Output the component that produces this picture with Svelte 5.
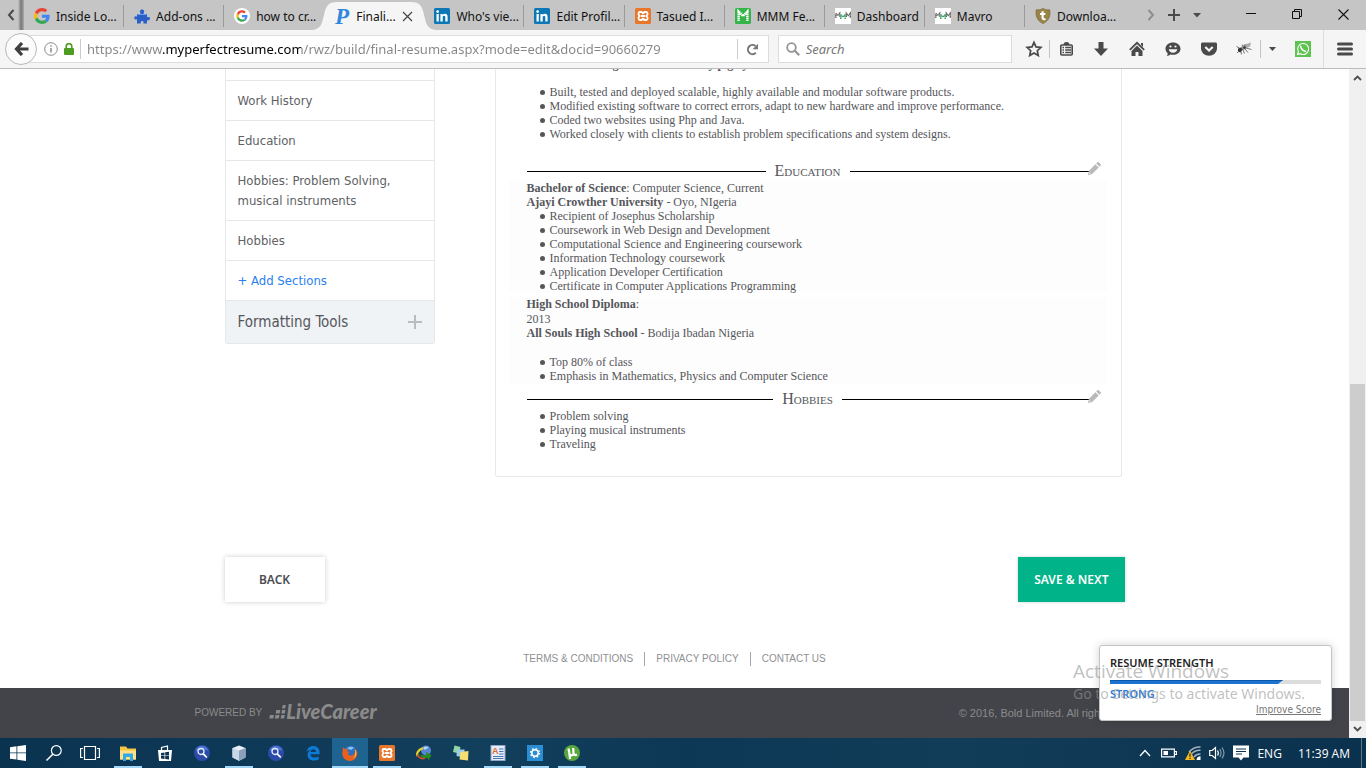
<script lang="ts">
  const tabs = [
    { icon: 'google', title: 'Inside Lo...' },
    { icon: 'puzzle', title: 'Add-ons ...' },
    { icon: 'googleRound', title: 'how to cr...' },
    { icon: 'perfect', title: 'Finali...', active: true },
    { icon: 'linkedin', title: "Who's vie..." },
    { icon: 'linkedin', title: 'Edit Profil...' },
    { icon: 'xampp', title: 'Tasued I...' },
    { icon: 'mmm', title: 'MMM Fe...' },
    { icon: 'mavro', title: 'Dashboard' },
    { icon: 'mavro', title: 'Mavro' },
    { icon: 'shield', title: 'Downloa...' }
  ];

  const sections = ['Work History', 'Education', 'Hobbies: Problem Solving, musical instruments', 'Hobbies'];

  const work = [
    'Built, tested and deployed scalable, highly available and modular software products.',
    'Modified existing software to correct errors, adapt to new hardware and improve performance.',
    'Coded two websites using Php and Java.',
    'Worked closely with clients to establish problem specifications and system designs.'
  ];
  const courses = [
    'Recipient of Josephus Scholarship',
    'Coursework in Web Design and Development',
    'Computational Science and Engineering coursework',
    'Information Technology coursework',
    'Application Developer Certification',
    'Certificate in Computer Applications Programming'
  ];
  const school = ['Top 80% of class', 'Emphasis in Mathematics, Physics and Computer Science'];
  const hobbies = ['Problem solving', 'Playing musical instruments', 'Traveling'];

  const apps = [
    { icon: 'folder', label: 'File Explorer', open: true },
    { icon: 'store', label: 'Store' },
    { icon: 'finder', label: 'Search tool' },
    { icon: 'cube', label: 'VirtualBox', open: true },
    { icon: 'finder', label: 'Search tool' },
    { icon: 'edge', label: 'Edge' },
    { icon: 'firefox', label: 'Firefox', open: true, current: true },
    { icon: 'xampp', label: 'XAMPP', open: true },
    { icon: 'idm', label: 'Download Manager' },
    { icon: 'notes', label: 'Sticky Notes' },
    { icon: 'wordpad', label: 'WordPad', open: true },
    { icon: 'gear', label: 'Settings', open: true },
    { icon: 'torrent', label: 'uTorrent', open: true }
  ];

  const strength = 82;
  let url = $state('https://www.myperfectresume.com/rwz/build/final-resume.aspx?mode=edit&docid=90660279');
  let query = $state('');
</script>

{#snippet googleG()}
  <path fill="#ea4335" d="M24 9.5c3.54 0 6.71 1.22 9.21 3.6l6.85-6.85C35.9 2.38 30.47 0 24 0 14.62 0 6.51 5.38 2.56 13.22l7.98 6.19C12.43 13.72 17.74 9.5 24 9.5z" />
  <path fill="#4285f4" d="M46.98 24.55c0-1.57-.15-3.09-.38-4.55H24v9.02h12.94c-.58 2.96-2.26 5.48-4.78 7.18l7.73 6c4.51-4.18 7.09-10.36 7.09-17.65z" />
  <path fill="#fbbc05" d="M10.53 28.59c-.48-1.45-.76-2.99-.76-4.59s.27-3.14.76-4.59l-7.98-6.19C.92 16.46 0 20.12 0 24c0 3.88.92 7.54 2.56 10.78l7.97-6.19z" />
  <path fill="#34a853" d="M24 48c6.48 0 11.93-2.13 15.89-5.81l-7.73-6c-2.15 1.45-4.92 2.3-8.16 2.3-6.26 0-11.57-4.22-13.47-9.91l-7.98 6.19C6.51 42.62 14.62 48 24 48z" />
{/snippet}

{#snippet icon(name: string)}
  <svg class="ico" viewBox="0 0 16 16" aria-hidden="true">
    {#if name === 'google'}
      <g transform="scale(.333)">{@render googleG()}</g>
    {:else if name === 'googleRound'}
      <circle cx="8" cy="8" r="8" fill="#fff" />
      <g transform="translate(2.3 2.3) scale(.237)">{@render googleG()}</g>
    {:else if name === 'puzzle'}
      <path fill="#2a5fc8" d="M3 6h3.400c.6-1-.7-1.400-.5-2.800C6.100 1.900 7.200 1.300 8.300 1.500c1.300.2 2 1.200 1.800 2.300-.2.900-.7 1.200-.3 2.200H13v3c.9.500 1.300-.3 2.200.1 1 .4 1 2.700-.1 3.200-.9.300-1.400-.4-2.100 0V15.500H9.600c-.6-.9.200-1.300-.2-2-.5-.8-2.100-.8-2.600 0-.4.800.4 1.200-.2 2H3v-4.200c-.7-.5-1 .4-1.900.2C.2 11.200 0 9 .9 8.400c.9-.500 1.400.400 2.100 0z" />
      <path d="M3.500 6.500h9" stroke="#6f9cf0" stroke-width="1" />
    {:else if name === 'perfect'}
      <text x="1" y="15.500" font-family="Liberation Serif, serif" font-size="23" font-weight="700" font-style="italic" fill="#2e86de">P</text>
    {:else if name === 'linkedin'}
      <rect width="16" height="16" rx="1.500" fill="#0b77b5" />
      <path fill="#fff" d="M2.500 6h2.300v7.500H2.500zM6.400 6h2.200v1c.5-.8 1.300-1.200 2.300-1.200 1.900 0 2.700 1.200 2.700 3.200v4.500h-2.300V9.500c0-1-.3-1.700-1.200-1.700-1 0-1.400.8-1.400 1.700v4H6.400z" />
      <circle cx="3.650" cy="3.600" r="1.350" fill="#fff" />
    {:else if name === 'xampp'}
      <rect width="16" height="16" rx="1.500" fill="#e8762b" />
      <path fill="none" stroke="#fff" stroke-width="1.800" d="M5 4h1.500L8 5.300 9.500 4H11a1.500 1.500 0 0 1 1.500 1.500v1L11.300 8l1.200 1.500v1A1.500 1.500 0 0 1 11 12H9.500L8 10.700 6.500 12H5a1.500 1.500 0 0 1-1.500-1.500v-1L4.700 8 3.500 6.500v-1A1.500 1.500 0 0 1 5 4zM6 8h4" />
    {:else if name === 'mmm'}
      <rect width="16" height="16" rx="1.500" fill="#35b44a" />
      <path fill="none" stroke="#fff" stroke-width="2.400" stroke-dasharray="1.600 .400" d="M3.600 13V3.500L8 8l4.400-4.500V13" />
    {:else if name === 'mavro'}
      <rect width="16" height="16" fill="#fff" />
      <path fill="none" stroke="#666" stroke-width="1.400" stroke-dasharray="1.300 .300" d="M.8 10V5.200L2.700 7.500l2-2.300V9M11.300 9V5.200l2 2.300 2-2.300V10" />
      <path fill="none" stroke="#32a060" stroke-width="1.500" stroke-dasharray="1.200 .400" d="M5.800 11V6.500L8 9l2.200-2.500V11" />
    {:else if name === 'shield'}
      <path fill="#9a8346" stroke="#71602f" stroke-width=".6" d="M8 .4c2.200 1.300 4.500 1.600 6.800 1.400.7 5.500-.3 10.700-6.800 13.800C1.500 12.500.5 7.300 1.200 1.800 3.500 2 5.800 1.700 8 .4z" />
      <path fill="none" stroke="#fff" stroke-width="2.200" d="M7.600 3.200v6.300c0 1.700 1.200 2 2.900 1.500M5 6h5.400" />
    {:else if name === 'folder'}
      <path fill="#f7c744" d="M0 1.500h6L7.500 3.500H16v11H0z" />
      <path fill="#fde08a" d="M0 5.500h16v9H0z" />
      <path fill="#2eaae6" d="M3 8.500h10V16h-3v-4H6v4H3z" />
    {:else if name === 'store'}
      <path fill="#fff" d="M1 5h14l-1 11H2z" />
      <path fill="none" stroke="#fff" stroke-width="1.200" d="M4.500 6V2.500l6-1.500v5" />
      <path fill="#0c3452" d="M4 8l3.500-.6v3H4zM8.200 7.300 12 6.800v3.600H8.200zM4 11.100h3.500v3L4 13.600zM8.200 11.100H12v3.500l-3.800-.5z" />
    {:else if name === 'finder'}
      <circle cx="8" cy="8" r="8" fill="#2c4ba8" />
      <path fill="#4d78d6" d="M8 1a7 7 0 0 1 6.500 5C11 4 6 4 1.500 6A7 7 0 0 1 8 1z" />
      <circle cx="7" cy="6.500" r="3" fill="none" stroke="#e5ebff" stroke-width="1.300" />
      <path d="m9.300 8.800 3.500 3.700" stroke="#fff" stroke-width="1.800" />
    {:else if name === 'cube'}
      <path fill="#e9f0f8" d="M8 .5 14.500 3v9.500L8 15.800 1.500 12.500V3z" />
      <path fill="#8ba0bd" d="M8 5.500 14.500 3v9.500L8 15.800z" />
      <path fill="#c9d6e6" d="M1.500 3 8 5.500v10.300l-6.500-3.300z" />
    {:else if name === 'edge'}
      <path fill="#0c7bd8" d="M1.500 7C2.200 3.200 4.700 1 8.300 1c4.300 0 6.300 3 6.300 6.400v1.800H5.500c.2 2.500 2 3.400 4.200 3.400 1.500 0 2.800-.4 4-1.100v3c-1.300.7-2.900 1-4.700 1C5 15.500 2.600 13.300 2.600 10c0-2.200 1.100-4 3-5C4.200 5 2.500 5.600 1.500 7zm4.100-.1h5.300c0-1.700-.8-2.700-2.500-2.700S5.800 5.300 5.600 6.900z" />
    {:else if name === 'firefox'}
      <circle cx="8.500" cy="7.500" r="6.800" fill="#2c6fc4" />
      <path fill="#83c3f2" d="M5 3.500C7 1.500 10 1.300 12 2.800L9 5z" />
      <path fill="#e8601c" d="M1 2.500c.8.300 1.400.8 1.800 1.400C4 3.400 5 3.700 6 4.400L4.900 6.200c1 .3 2 .3 2.600.8L5.800 8.600c1 2.500 4 2.700 6 1 1.300-1.300 1.500-3.500.9-5.600 1.500 1 2.500 2.700 2.700 4.500A7.400 7.400 0 0 1 8 15.900C3 15.900.1 12 .3 8c.1-2 .7-3.500.7-5.500z" />
      <path fill="#fbb829" d="M12.700 4c2.700 3 2 8-1.700 10 2.300-3 2.500-6.500 1.700-10z" />
    {:else if name === 'idm'}
      <circle cx="10" cy="5.500" r="5" fill="#5686d4" />
      <path fill="#b6d3f8" d="M7 3c1.500-2 4-2 5.500-.6L9 5z" />
      <path fill="none" stroke="#e9d322" stroke-width="2.200" d="M7 3C2 5 0 8.500 1.500 11" />
      <path fill="none" stroke="#d94c25" stroke-width="2" d="M1.300 9.500C2.500 13 6 14 9 13" />
      <path fill="#2a8c1e" d="M3 9c3 1.800 5 1.600 7.300.7V7L15.500 10.500 12 15.500v-2.700C8 13.500 4.500 12.500 3 9z" />
    {:else if name === 'notes'}
      <path fill="#8fd6a0" d="m1.500.5 6 1.500L6 8.500 0 7z" />
      <path fill="#9cccec" d="M4 4.500h7.500v8L3.500 11z" />
      <path fill="#f6df72" d="m7.500 7 8-1-.5 9.500-8.500-1z" />
    {:else if name === 'wordpad'}
      <rect x="1" y=".5" width="14" height="15" fill="#e4edf8" stroke="#8fa8c8" />
      <text x="2" y="9" font-family="Liberation Sans, sans-serif" font-size="9" font-weight="700" fill="#e06a28">A</text>
      <path stroke="#4d79b8" d="M9 4h4.500M9 6.500h4.500M9 9h4.500M3 11.500h10.500M3 13.500h10.500" />
    {:else if name === 'gear'}
      <rect width="16" height="16" fill="#2b8dd3" />
      <circle cx="8" cy="8" r="3.200" fill="none" stroke="#fff" stroke-width="1.500" />
      <circle cx="8" cy="8" r="4.500" fill="none" stroke="#fff" stroke-width="1.300" stroke-dasharray="1.600 1.934" />
    {:else if name === 'torrent'}
      <circle cx="8" cy="8" r="8" fill="#58a63c" />
      <path fill="none" stroke="#fff" stroke-width="2.200" d="M4.500 3.500 5.500 9c.3 1.800 3.500 1.800 4-.2L9.200 3M9.500 8.500c.4 1.800 2 2 3.500 1M5.300 8l.8 6" />
    {/if}
  </svg>
{/snippet}

{#snippet bullets(items: string[])}
  <ul>
    {#each items as item}<li>{item}</li>{/each}
  </ul>
{/snippet}

{#snippet heading(title: string)}
  <div class="heading">
    <h2>{title}</h2>
    <button class="edit" aria-label="Edit {title}">
      <svg viewBox="0 0 13 13" width="13" height="13"><path fill="#b8b9bb" d="M0 13l.8-3.900L7.400 2.300l3.300 3.300L3.900 12.200zM8.200 1.500 9.400.3c.4-.4 1-.4 1.400 0l1.900 1.900c.4.400.4 1 0 1.400l-1.200 1.200z" /><path d="m.8 10.200 2 2" stroke="#fff" stroke-width=".7" /></svg>
    </button>
  </div>
{/snippet}

<div class="screen">
  <header class="tabbar">
    <button class="scroll-left" aria-label="Scroll tabs left">
      <svg width="8" height="12" viewBox="0 0 8 12"><path d="M6.500 1 2 6l4.500 5" fill="none" stroke="#4a4a4a" stroke-width="2" /></svg>
    </button>
    <nav class="tabs" aria-label="Tabs">
      {#each tabs as tab}
        <div class="tab" class:active={tab.active}>
          {#if tab.active}
            <svg class="shape" viewBox="0 0 130 30" preserveAspectRatio="none" aria-hidden="true"><path fill="#f5f5f5" d="M0 30C12 30 12 22 14 15 16 6 18 2 27 2H101C110 2 112 6 114 15 116 22 116 30 128 30z" /></svg>
          {/if}
          {@render icon(tab.icon)}
          <span>{tab.title}</span>
          {#if tab.active}
            <button class="close" aria-label="Close tab"><svg width="11" height="11" viewBox="0 0 11 11"><path d="m1 1 9 9M10 1l-9 9" stroke="#444" stroke-width="1.200" /></svg></button>
          {/if}
        </div>
      {/each}
    </nav>
    <div class="tab-tools">
      <button aria-label="Scroll tabs right"><svg width="8" height="12" viewBox="0 0 8 12"><path d="m1.500 1 4.500 5-4.500 5" fill="none" stroke="#8e8e8e" stroke-width="2" /></svg></button>
      <button aria-label="New tab"><svg width="12" height="12" viewBox="0 0 12 12"><path d="M6 0v12M0 6h12" stroke="#4a4a4a" stroke-width="2" /></svg></button>
      <button aria-label="List tabs"><svg width="8" height="5" viewBox="0 0 8 5"><path d="M0 0h8L4 4.500z" fill="#4a4a4a" /></svg></button>
    </div>
    <div class="window-tools">
      <button aria-label="Minimize"><svg width="10" height="10" viewBox="0 0 10 10"><path d="M0 4.500h10" stroke="#111" /></svg></button>
      <button aria-label="Restore"><svg width="10" height="10" viewBox="0 0 10 10"><path d="M.5 2.500h7v7h-7zM2.500 2V.5h7v7H8" fill="none" stroke="#111" /></svg></button>
      <button aria-label="Close"><svg width="11" height="11" viewBox="0 0 11 11"><path d="m.5.5 10 10M10.500.5l-10 10" stroke="#111" stroke-width="1.100" /></svg></button>
    </div>
  </header>

  <div class="toolbar">
    <button class="back" aria-label="Go back">
      <svg width="15" height="14" viewBox="0 0 15 14"><path d="M8 1 2.500 7 8 13M3 7h11.500" fill="none" stroke="#3f3f3f" stroke-width="3.200" /></svg>
    </button>
    <div class="urlbox">
      <svg width="14" height="14" viewBox="0 0 14 14" aria-hidden="true"><circle cx="7" cy="7" r="6.300" fill="none" stroke="#8a8a8a" /><path d="M7 6v4.500M7 3.300v1.400" stroke="#8a8a8a" stroke-width="1.500" /></svg>
      <svg width="10" height="12" viewBox="0 0 10 12" aria-hidden="true"><path d="M2.200 5.500V3.500a2.800 2.800 0 0 1 5.600 0v2" fill="none" stroke="#4f9c22" stroke-width="1.600" /><rect y="5" width="10" height="7" rx="1" fill="#4f9c22" /></svg>
      <input class="url" aria-label="Address" bind:value={url} spellcheck="false" />
      <button class="reload" aria-label="Reload">
        <svg width="13" height="13" viewBox="0 0 13 13"><path d="M9.800 9.800A4.600 4.600 0 1 1 9.500 3" fill="none" stroke="#777" stroke-width="2" /><path d="M12 .8v5.400H6.600z" fill="#777" /></svg>
      </button>
    </div>
    <label class="searchbox">
      <svg width="14" height="14" viewBox="0 0 14 14" aria-hidden="true"><circle cx="5.500" cy="5.500" r="4.300" fill="none" stroke="#949494" stroke-width="1.800" /><path d="m8.800 8.800 4.400 4.400" stroke="#949494" stroke-width="2.200" /></svg>
      <input aria-label="Search" placeholder="Search" bind:value={query} />
    </label>
    <div class="tools">
      <button class="star" aria-label="Bookmark"><svg class="ico" viewBox="0 0 16 16"><path d="m8 1.400 2 4.500 4.900.5-3.600 3.300 1 4.900L8 12.100l-4.300 2.500 1-4.900L1.100 6.400 6 5.900z" fill="none" stroke="#4a4a4a" stroke-width="1.700" /></svg></button>
      <button class="list split" aria-label="Bookmarks list"><svg class="ico" viewBox="0 0 16 16"><path fill="none" stroke="#4a4a4a" stroke-width="1.600" d="M2.800 4h9.400a1 1 0 0 1 1 1v8a1 1 0 0 1-1 1H2.800a1 1 0 0 1-1-1V5a1 1 0 0 1 1-1z" /><path fill="#4a4a4a" d="M4.500 4c0-2 1-3 3-3s3 1 3 3z" /><path stroke="#4a4a4a" stroke-width="1.500" d="M3.500 6.500H5M6.200 6.500H12M3.500 9H5M6.200 9H12M3.500 11.500H5M6.200 11.500H12" /></svg></button>
      <button aria-label="Downloads"><svg class="ico" viewBox="0 0 16 16"><path fill="#4a4a4a" d="M5.500 1h5v6.500H15L8 15 1 7.500h4.500z" /></svg></button>
      <button aria-label="Home"><svg class="ico" viewBox="0 0 16 16"><path d="m.8 8.800 7.200-7 7.200 7" fill="none" stroke="#4a4a4a" stroke-width="1.800" /><path fill="#4a4a4a" d="M8 4.500 13.500 10v5h-4v-4h-3v4h-4v-5zM12 2h2v4l-2-2z" /></svg></button>
      <button aria-label="Hello"><svg class="ico" viewBox="0 0 16 16"><path fill="#4a4a4a" d="M8 1.500c4.200 0 7.500 2.600 7.500 6.200S12.200 13.800 8 13.800c-.9 0-1.700-.1-2.500-.3-1 .9-2.300 1.400-3.700 1.400.7-.8.900-1.700.9-2.700C1.300 11.100.5 9.500.5 7.700.5 4.100 3.800 1.500 8 1.500z" /><path fill="#f5f5f5" d="M3.700 8.200h8.600c-.3 2.200-2 3.500-4.300 3.500s-4-1.300-4.300-3.500z" /><circle cx="5.500" cy="5.500" r="1.100" fill="#f5f5f5" /><circle cx="10.500" cy="5.500" r="1.100" fill="#f5f5f5" /></svg></button>
      <button aria-label="Pocket"><svg class="ico" viewBox="0 0 16 16"><path fill="#4a4a4a" d="M1.500 1.500h13c.8 0 1.500.6 1.500 1.500v4.500a8 7.300 0 0 1-16 0V3c0-.9.700-1.500 1.500-1.500z" /><path d="M4.300 6 8 9.500 11.700 6" fill="none" stroke="#f5f5f5" stroke-width="2.200" /></svg></button>
      <button class="fire" aria-label="Firebug"><svg class="ico" viewBox="0 0 16 16"><path fill="#909090" d="m5 6 4-3 4 .5-2.500 4L6 9.500z" /><path fill="#333" d="M2 7.500 5 6.500l1.500 2L4.500 11.500l-2.500-1zM7 6.500l2-1.500 1 2-2 1z" /><path fill="none" stroke="#666" stroke-width=".9" d="M.5 5.500 3.500 7M1 12l2-2M5.500 13.500l-.5-3M8.500 12.500 7 9M12 11.500 9 8M15.500 8.500 10 7M7 5l-1-1.500" /><path fill="#aaa" d="m9 3.500 6-2-1 4-3.500 1.500z" /></svg></button>
      <button class="caret split" aria-label="Firebug menu"><svg width="7" height="4" viewBox="0 0 7 4"><path d="M0 0h7L3.500 4z" fill="#4a4a4a" /></svg></button>
      <button class="wa" aria-label="WhatsApp"><svg class="ico" viewBox="0 0 16 16"><rect width="16" height="16" fill="#5fc351" /><path d="m2.500 13.500.9-2.800A5.500 5.500 0 1 1 5.400 12.700z" fill="none" stroke="#fff" stroke-width="1.100" /><path d="M6 5c-.6 1 .2 2.500 1.300 3.600S10 10.500 10.900 10" fill="none" stroke="#fff" stroke-width="1.500" /></svg></button>
      <button class="menu split" aria-label="Open menu"><svg width="16" height="14" viewBox="0 0 16 14"><path d="M1.500 2h13M1.500 7h13M1.500 12h13" stroke="#4a4a4a" stroke-width="3" stroke-linecap="round" /></svg></button>
    </div>
  </div>

  <div class="viewport">
    <div class="page">
      <main>
        <div class="columns">
          <aside>
            <div class="stub"></div>
            {#each sections as section}<a href="#section">{section}</a>{/each}
            <a class="add" href="#add">+ Add Sections</a>
            <button class="format">Formatting Tools
              <svg width="14" height="14" viewBox="0 0 14 14" aria-hidden="true"><path d="M7 0v14M0 7h14" stroke="#b9bbbd" stroke-width="2" /></svg>
            </button>
          </aside>
          <article>
            <div class="cut"><b>g</b><b>y p g &nbsp; y</b></div>
            {@render bullets(work)}
            {@render heading('Education')}
            <section>
              <p><b>Bachelor of Science</b>: Computer Science, Current</p>
              <p><b>Ajayi Crowther University</b> - Oyo, NIgeria</p>
              {@render bullets(courses)}
            </section>
            <section class="second">
              <p><b>High School Diploma</b>:</p>
              <p>2013</p>
              <p><b>All Souls High School</b> - Bodija Ibadan Nigeria</p>
              <div class="space"></div>
              {@render bullets(school)}
            </section>
            {@render heading('Hobbies')}
            {@render bullets(hobbies)}
          </article>
        </div>
        <div class="actions">
          <button class="btn">BACK</button>
          <button class="btn primary">SAVE &amp; NEXT</button>
        </div>
      </main>
      <nav class="links" aria-label="Legal">
        <a href="#terms">TERMS &amp; CONDITIONS</a>
        <a href="#privacy">PRIVACY POLICY</a>
        <a href="#contact">CONTACT US</a>
      </nav>
      <footer>
        <div class="foot">
          <span>POWERED BY</span>
          <span class="logo">
            <svg width="17" height="15" viewBox="0 0 17 15" aria-hidden="true"><path fill="#8b8b8c" d="M1 11h4l-.7 3.500H.3zM6.500 11h4l-.7 3.500h-4zM7.300 6h4l-.7 3.500h-4zM12.300 11h3.500l-.7 3.500h-3.500zM13 6h3.500l-.7 3.500h-3.500zM13.800 1h3l-.7 3.500h-3z" /></svg>LiveCareer</span>
          <span class="copy">© 2016, Bold Limited. All rights reserved</span>
        </div>
      </footer>
    </div>
    <div class="scrollbar" aria-hidden="true">
      <svg width="9" height="6" viewBox="0 0 9 6"><path d="M1 5l3.500-3.500L8 5" fill="none" stroke="#4f4f4f" stroke-width="1.800" /></svg>
      <div class="track"><div class="thumb"></div></div>
      <svg width="9" height="6" viewBox="0 0 9 6"><path d="M1 1l3.500 3.500L8 1" fill="none" stroke="#4f4f4f" stroke-width="1.800" /></svg>
    </div>
    <div class="strength">
      <strong>RESUME STRENGTH</strong>
      <div class="bar"><div class="fill" style="width:{strength}%"></div></div>
      <em>STRONG</em>
      <a href="#improve">Improve Score</a>
    </div>
    <div class="activate">
      <div class="big">Activate Windows</div>
      <div>Go to Settings to activate Windows.</div>
    </div>
  </div>

  <div class="taskbar">
    <button aria-label="Start"><svg class="ico" viewBox="0 0 16 16"><path fill="#fff" d="M0 2.200 6.500 1.300v6.200H0zM7.300 1.200 16 0v7.500H7.300zM0 8.300h6.500v6.300L0 13.700zM7.300 8.300H16V16l-8.700-1.200z" /></svg></button>
    <button aria-label="Search Windows"><svg class="ico" viewBox="0 0 16 16"><circle cx="10.300" cy="5.500" r="4.900" fill="none" stroke="#fff" stroke-width="1.200" /><path d="M6.800 9.200.5 15.500" stroke="#fff" stroke-width="1.500" /></svg></button>
    <button aria-label="Task view"><svg width="20" height="16" viewBox="0 0 20 16"><path d="M4.500 1.500h11v13h-11zM3 3.500H.6v9H3M17 3.500h2.400v9H17" fill="none" stroke="#fff" stroke-width="1.200" /></svg></button>
    <div class="apps">
      {#each apps as app}
        <button class:open={app.open} class:current={app.current} aria-label={app.label}>{@render icon(app.icon)}</button>
      {/each}
    </div>
    <div class="tray">
      <svg class="up" width="12" height="8" viewBox="0 0 12 8"><path d="m1 7 5-5.500L11 7" fill="none" stroke="#fff" stroke-width="1.300" /></svg>
      <svg width="16" height="10" viewBox="0 0 16 10"><path d="M.6 1.100h12.800v7.800H.6zM14 3.500h1.400v3H14" fill="none" stroke="#fff" stroke-width="1.200" /><path fill="#fff" d="M2.500 3H7v4H2.500z" /></svg>
      <svg class="ico" viewBox="0 0 16 16"><path d="M4 7C7 3.500 11 1.800 15.500 2M6.500 9c2-2.500 5.500-4 9-3.800M9 12c1.500-2 4-3.200 6.500-3" fill="none" stroke="#9fb2bf" stroke-width="1.400" /><path fill="#fff" d="M11.500 15a4 4 0 0 1 4-3.800V15z" /><path fill="#f6b91a" d="M5 5.500 10 15H0z" /><path d="M5 8.500v3.300M5 12.700v1.300" stroke="#222" stroke-width="1.200" /></svg>
      <svg class="ico" viewBox="0 0 16 16"><path d="M.7 5.500h2.500L6.500 2.500v11l-3.300-3H.7zM8.500 5.500c1 1.500 1 3.500 0 5" fill="none" stroke="#fff" stroke-width="1.200" /><path d="M10.700 4c1.700 2.500 1.700 5.500 0 8M13 2.500c2.500 3.500 2.500 7.500 0 11" fill="none" stroke="#7f9bab" stroke-width="1.200" /></svg>
      <svg class="ico" viewBox="0 0 16 16"><path fill="#fff" d="M0 .5h16v12h-5.500L8 15.500 5.500 12.500H0z" /><path d="M3 4h10M3 6.500h10M3 9h6" stroke="#0b3350" stroke-width="1.200" /></svg>
      <span>ENG</span>
      <span class="clock">11:39 AM</span>
    </div>
    <div class="desktop"></div>
  </div>
</div>

<style>
  :global(body) { margin: 0; }
  :global(*) { box-sizing: border-box; }
  button { border: 0; padding: 0; background: none; font: inherit; color: inherit; display: flex; align-items: center; justify-content: center; }
  input { border: 0; padding: 0; outline: 0; background: none; min-width: 0; font: inherit; }
  svg { display: block; flex: none; }
  a { color: inherit; text-decoration: none; }
  p, ul, h2 { margin: 0; padding: 0; }
  .ico { width: 16px; height: 16px; overflow: visible; }

  .screen { height: 100vh; display: flex; flex-direction: column; overflow: hidden; background: #fff; font-family: "Noto Sans", "Open Sans", sans-serif; font-size: 12px; }

  .tabbar { flex: none; height: 30px; display: flex; background: #c5c5c5; color: #111; }
  .scroll-left { width: 24px; flex: none; padding-right: 3px; background: linear-gradient(90deg, #c5c5c5 18px, #777 21px, #a9a9a9 24px); }
  .tabs { display: flex; flex: 0 1 1101px; min-width: 0; }
  .tab { position: relative; flex: 1 1 100px; min-width: 0; display: flex; align-items: center; gap: 6px; padding: 2px 0 0 10px; white-space: nowrap; }
  .tab > .ico, .tab > span { position: relative; }
  .tab::after { content: ""; position: absolute; right: 0; top: 5px; height: 22px; border-right: 1px solid #999; }
  .tab.active::after, .tab:nth-child(3)::after, .tab:last-child::after { display: none; }
  .tab .shape { position: absolute; left: -14px; top: 0; width: calc(100% + 30px); height: 30px; }
  .tab .close { position: relative; }
  .tab-tools { display: flex; flex: none; margin-left: 14px; }
  .tab-tools button { width: 23px; }
  .window-tools { display: flex; margin-left: auto; }
  .window-tools button { width: 46px; height: 28px; }

  .toolbar { flex: none; height: 39px; display: flex; align-items: center; background: #f5f5f5; border-bottom: 1px solid #bcbcbc; position: relative; z-index: 1; color: #777; }
  .back { flex: none; width: 32px; height: 32px; margin-left: 5px; border: 1px solid #b8b8b8; border-radius: 50%; background: #fbfbfb; z-index: 1; }
  .urlbox { flex: 745 1 0; height: 28px; margin-left: -10px; padding-left: 16px; display: flex; align-items: center; gap: 6px; border: 1px solid #dcdcdc; background: #fff; }
  .url { flex: 1; height: 20px; padding-left: 6px; border-left: 1px solid #ccc; font-size: 13px; color: transparent; caret-color: #333; background: linear-gradient(90deg, #858585 82px, #000 82px, #000 220px, #858585 220px); background-clip: text; -webkit-background-clip: text; border-radius: 0; }
  .reload { width: 31px; height: 20px; border-left: 1px solid #ccc; }
  .searchbox { flex: 232 1 0; height: 28px; margin-left: 9px; padding-left: 7px; display: flex; align-items: center; gap: 6px; border: 1px solid #dcdcdc; background: #fff; }
  .searchbox input { flex: 1; font-size: 13px; }
  .searchbox input::placeholder { color: #777; font-style: italic; opacity: 1; }
  .tools { flex: none; display: flex; align-items: center; padding-left: 6px; }
  .tools button { width: 36px; height: 18px; }
  .tools .star { width: 31px; }
  .tools .split { border-left: 1px solid #c4c4c4; }
  .tools .list { width: 34px; }
  .tools .fire { width: 33px; }
  .tools .caret { width: 23px; }
  .tools .wa { width: 40px; }
  .tools .menu { width: 43px; height: 38px; border-color: #dedede; }

  .viewport { position: relative; flex: 1; min-height: 0; display: flex; overflow: hidden; }
  .page { flex: 1; min-width: 0; display: flex; flex-direction: column; }
  main { width: 100%; max-width: 900px; margin: 0 auto; }
  .columns { display: flex; align-items: flex-start; gap: 60px; padding-right: 3px; }
  aside { width: 210px; flex: none; border: 1px solid #e4e8eb; border-top: 0; border-radius: 0 0 3px 3px; font: 13px/20px "DejaVu Sans Condensed", "DejaVu Sans", sans-serif; font-stretch: condensed; color: #606165; }
  aside .stub { height: 11px; }
  aside a { display: block; padding: 10px 36px 9px 12px; border-top: 1px solid #e4e8eb; }
  aside .add { color: #2a7ff0; }
  .format { width: 100%; height: 43px; padding: 0 12px; justify-content: space-between; border-top: 1px solid #e4e8eb; background: #eff3f6; font-size: 15px; color: #55565a; }

  article { flex: 1; min-width: 0; padding: 0 20px 25px 31px; border: 1px solid #e6e8ea; border-top: 0; border-radius: 0 0 3px 3px; font: 12px/14px "Liberation Serif", serif; color: #55565a; }
  .cut { height: 2px; margin-bottom: 14px; padding-left: 86px; display: flex; align-items: flex-end; gap: 90px; overflow: hidden; white-space: nowrap; }
  article ul { padding-left: 13px; list-style: none; }
  article li { display: flex; align-items: center; gap: 5px; }
  article li::before { content: ""; flex: none; width: 5px; height: 5px; border-radius: 50%; background: #55565a; }
  .heading { position: relative; display: flex; align-items: center; margin: 20px 12px 0 0; }
  .heading h2 { flex: 1; display: flex; align-items: center; gap: 9px; font: small-caps 16px/20px "Liberation Serif", serif; }
  .heading h2::before, .heading h2::after { content: ""; flex: 1; height: 1px; background: #000; }
  .edit { position: absolute; right: -12px; top: 1px; }
  section { margin: 0 -6px 0 -18px; padding: 0 6px 0 18px; background: #fdfdfd; }
  section .space { height: 15px; }
  section.second { margin-top: 4px; padding-bottom: 1px; }
  section.second p:nth-child(1) { margin-bottom: 1px; }
  section + .heading { margin-top: 5px; }

  .actions { display: flex; justify-content: space-between; margin-top: 80px; }
  .btn { min-width: 100px; height: 45px; padding: 0 16px; background: #fff; box-shadow: 0 0 5px rgba(0, 0, 0, .2); font-size: 12px; font-weight: 600; color: #4d4e53; }
  .primary { background: #00b388; color: #fff; box-shadow: 0 0 3px rgba(0, 0, 0, .2); }
  .links { display: flex; justify-content: center; margin-top: 50px; font: 10px/14px "Liberation Sans", sans-serif; color: #8f9092; }
  .links a { padding: 0 11px; }
  .links a + a { border-left: 1px solid #a5a5a7; }
  footer { margin-top: 22px; flex: none; background: #434449; }
  .foot { width: 100%; max-width: 960px; height: 50px; margin: 0 auto; display: flex; align-items: center; font: 10px/14px "Liberation Sans", sans-serif; color: #8b8b8c; }
  .logo { display: flex; align-items: center; margin-left: 7px; padding-bottom: 4px; font: italic 900 20px/20px Lato, sans-serif; }
  .copy { margin-left: auto; font-size: 11px; }

  .scrollbar { flex: none; width: 17px; padding: 6px 0; display: flex; flex-direction: column; align-items: center; gap: 5px; background: #f0f0f0; }
  .track { flex: 1; width: 100%; display: flex; flex-direction: column; justify-content: flex-end; }
  .thumb { height: 53%; margin: 0 1px; background: #cdcdcd; }

  .strength { position: absolute; right: 34px; bottom: 17px; width: 233px; padding: 9px 10px 4px; display: flex; flex-direction: column; background: #fff; border: 1px solid #c4c4c4; border-radius: 3px; box-shadow: 0 0 8px rgba(0, 0, 0, .18); line-height: 16px; font-size: 11px; }
  .strength strong { font-weight: 600; color: #222; }
  .bar { height: 4px; margin: 9px 0 2px; background: #dcdcdc; }
  .fill { height: 100%; background: #1c73d1; border-top: 1px solid #0b57a8; clip-path: polygon(0 0, 100% 0, calc(100% - 5px) 100%, 0 100%); }
  .strength em { font-style: normal; font-weight: 600; color: #2a7bd6; }
  .strength a { align-self: flex-end; margin-top: 2px; font: 10px/12px "DejaVu Sans Condensed", "DejaVu Sans", sans-serif; font-stretch: condensed; color: #777; text-decoration: underline; }
  .activate { position: absolute; right: 40px; bottom: 33px; width: 236px; white-space: nowrap; font-size: 14px; line-height: 22px; color: rgba(150, 150, 150, .6); pointer-events: none; }
  .activate { right: 57px; }
  .activate .big { font: 19px/24px "Open Sans", sans-serif; }

  .taskbar { flex: none; height: 30px; display: flex; background: linear-gradient(90deg, #0a3350, #123f5c 35%, #0c3855 50%, #123d59 70%, #0a314d); color: #fff; }
  .taskbar button { width: 36px; height: 30px; flex: none; }
  .apps { display: flex; gap: 1px; margin-left: 2px; }
  .apps .open { background: linear-gradient(#a3d7f7, #a3d7f7) center bottom / 28px 2px no-repeat; }
  .apps .current { background: linear-gradient(#a3d7f7, #a3d7f7) center bottom / 100% 2px no-repeat #1f6391; }
  .tray { margin-left: auto; display: flex; align-items: center; gap: 8px; font-family: "Open Sans", sans-serif; }
  .tray .up { margin-right: 2px; }
  .clock { margin: 0 11px 0 8px; }
  .desktop { width: 5px; border-left: 1px solid #5b7789; }
</style>
